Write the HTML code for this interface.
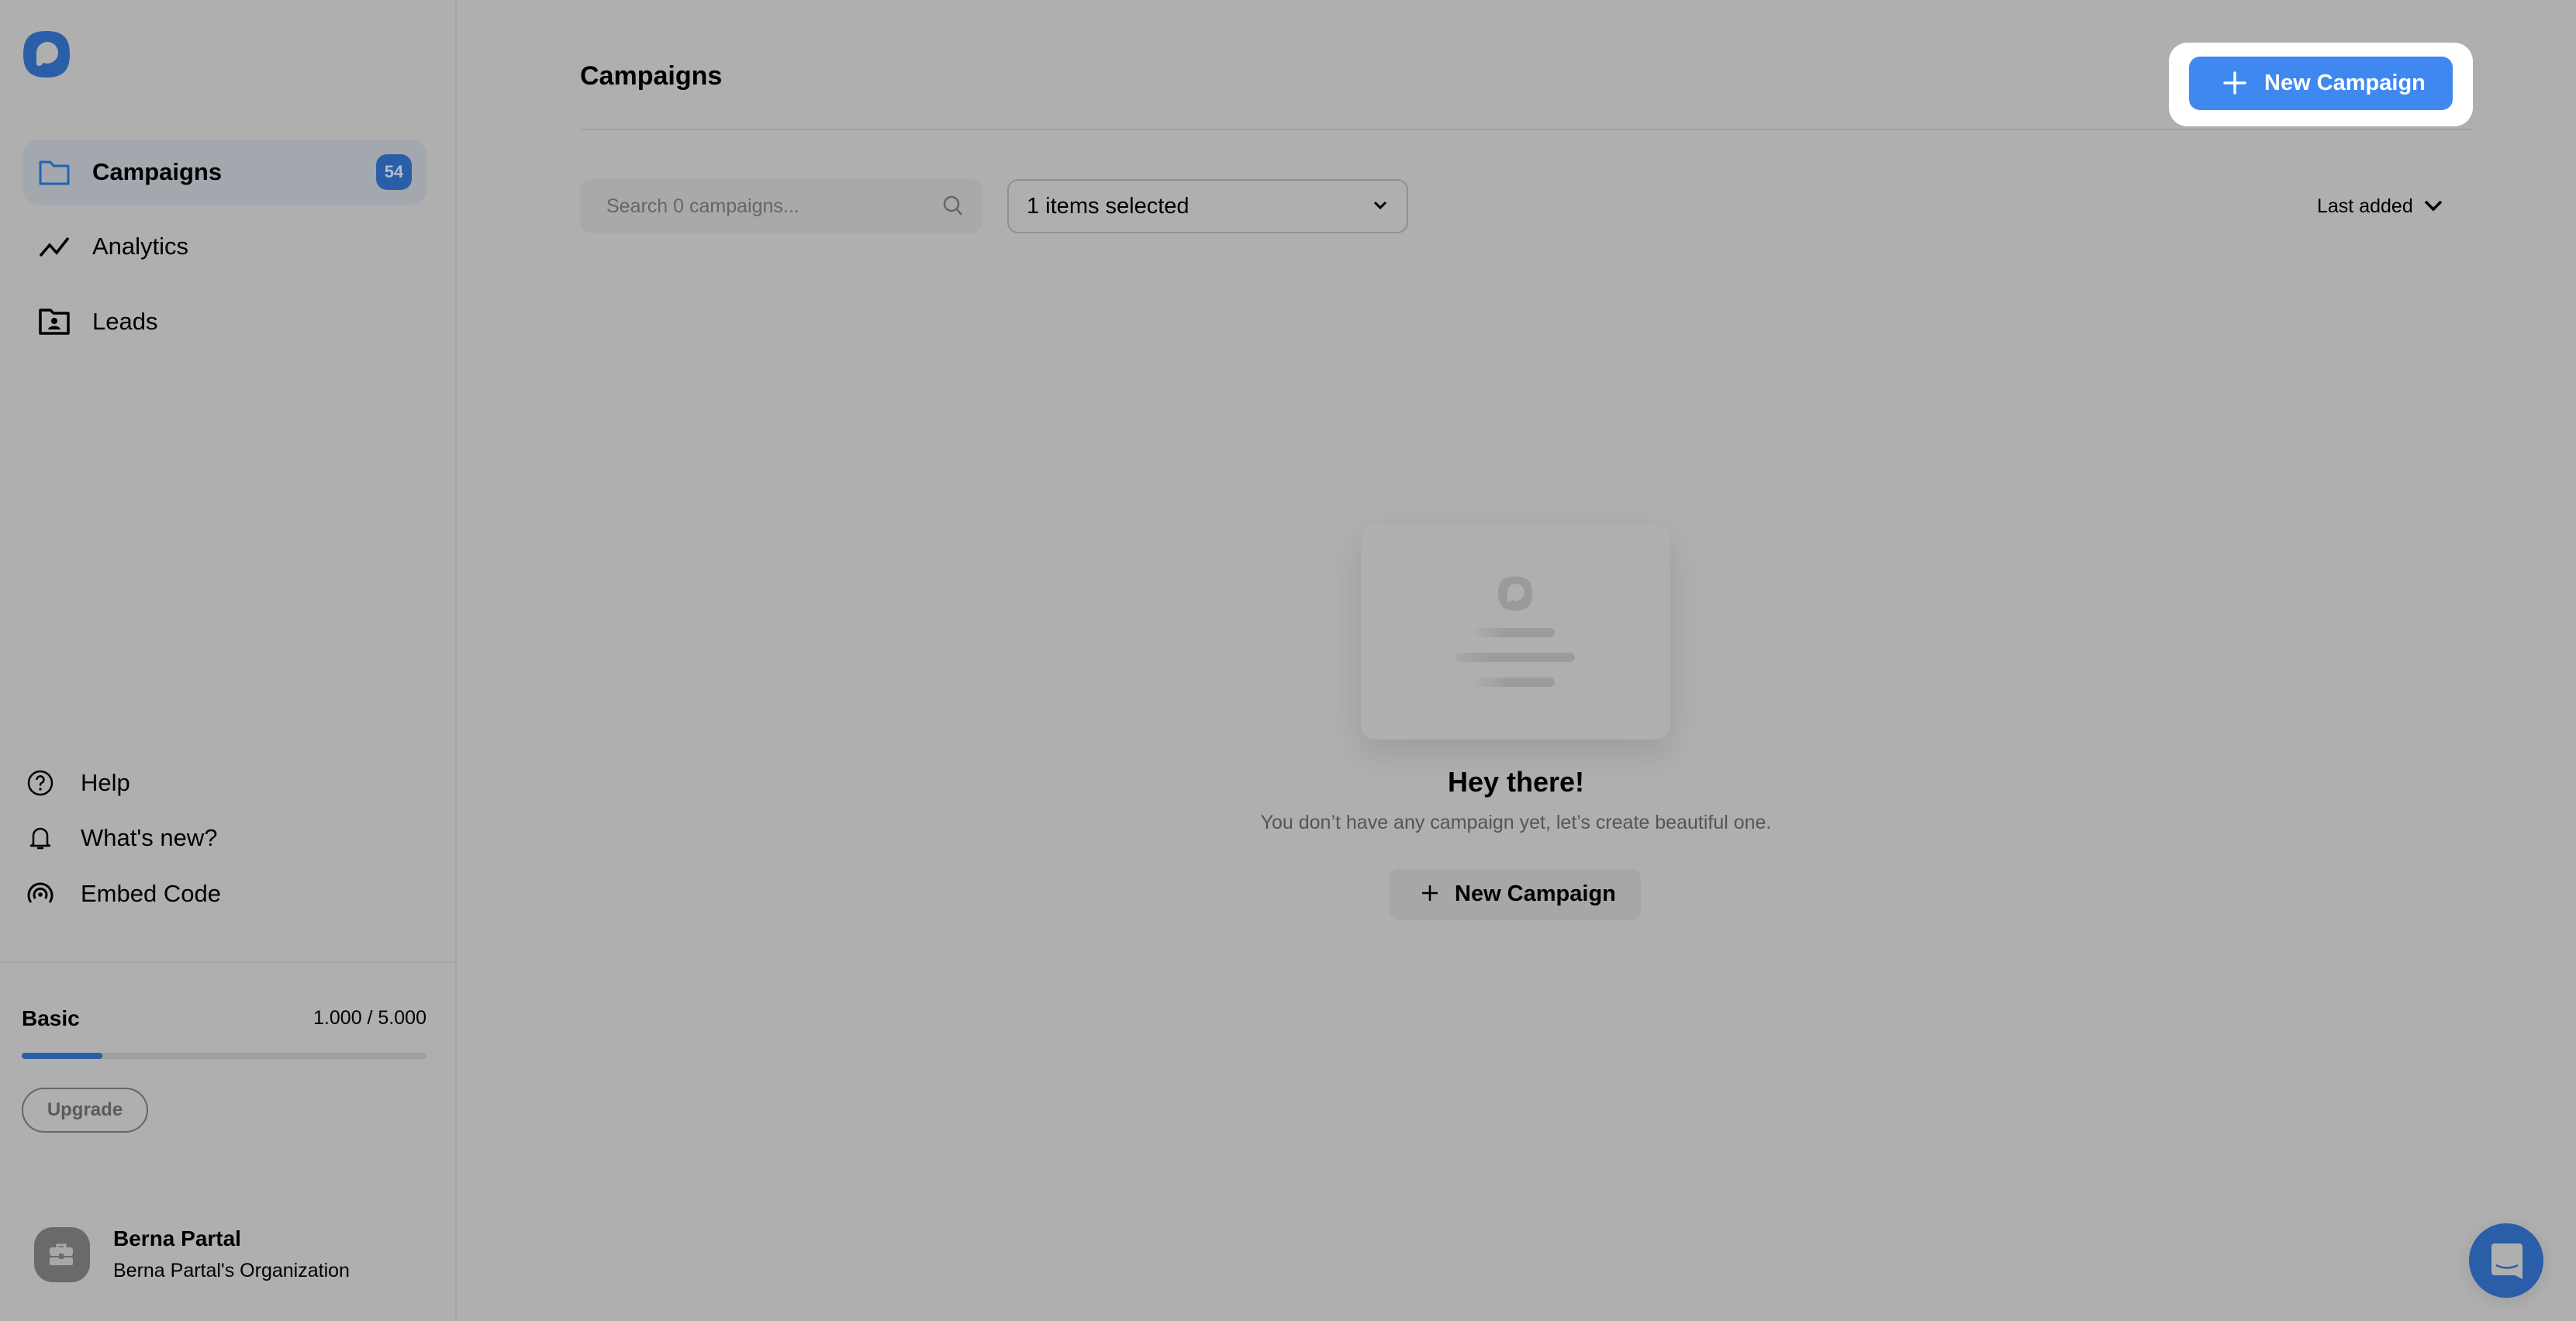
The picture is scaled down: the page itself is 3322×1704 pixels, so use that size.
<!DOCTYPE html>
<html><head><meta charset="utf-8"><style>
*{margin:0;padding:0;box-sizing:border-box}
body{width:3322px;height:1704px;background:#afafaf;font-family:"Liberation Sans",sans-serif;position:relative;overflow:hidden;color:#000}
.a{position:absolute}
.side{left:0;top:0;width:589px;height:1704px;border-right:2px solid #a3a3a3}
.nav{font-size:31px;line-height:1}
</style></head><body>
<div class="a side"></div>
<svg class="a" style="left:28px;top:38px" width="64" height="64" viewBox="0 0 64 64"><path d="M32 2C12 2 2 10 2 32s10 30 30 30 30-8 30-30S52 2 32 2z" fill="#2a5ea8"/><circle cx="33" cy="30" r="14" fill="#afafaf"/><path d="M19 30v14c0 4 6 4 8 0l2-4z" fill="#afafaf"/></svg>
<div class="a" style="left:29px;top:180px;width:521px;height:84px;background:#a3a7ae;border-radius:20px"></div>
<svg class="a" style="left:50px;top:205px" width="40" height="34" viewBox="0 0 40 34"><path d="M2 4h13l4 5h19v23H2z" fill="none" stroke="#1f64b8" stroke-width="3" stroke-linejoin="round"/></svg>
<div class="a nav" style="left:119px;top:206px;font-weight:700">Campaigns</div>
<div class="a" style="left:485px;top:199px;width:46px;height:46px;background:#2a5ea8;border-radius:14px;color:#b5bccb;font-size:22px;font-weight:700;text-align:center;line-height:46px">54</div>
<svg class="a" style="left:50px;top:304px" width="40" height="28" viewBox="0 0 40 28"><path d="M2 26L14 12l9 10L38 3" fill="none" stroke="#000" stroke-width="3.5"/></svg>
<div class="a nav" style="left:119px;top:302px">Analytics</div>
<svg class="a" style="left:50px;top:398px" width="40" height="34" viewBox="0 0 40 34"><path d="M2 2h13l4 4h19v26H2z" fill="none" stroke="#000" stroke-width="3.5" stroke-linejoin="round"/><circle cx="20" cy="16" r="4" fill="#000"/><path d="M12 27c1-6 15-6 16 0z" fill="#000"/></svg>
<div class="a nav" style="left:119px;top:399px">Leads</div>
<svg class="a" style="left:35px;top:993px" width="34" height="34" viewBox="0 0 34 34"><circle cx="17" cy="17" r="15" fill="none" stroke="#000" stroke-width="2.5"/><path d="M12.5 13a4.5 4.5 0 1 1 6 4c-1.5.7-1.5 2-1.5 3.5" fill="none" stroke="#000" stroke-width="2.5"/><circle cx="17" cy="25" r="1.6"/></svg>
<div class="a nav" style="left:104px;top:994px">Help</div>
<svg class="a" style="left:37px;top:1064px" width="30" height="34" viewBox="0 0 30 34"><path d="M6 25V14a9 9 0 0 1 18 0v11l3 2H3z" fill="none" stroke="#000" stroke-width="2.5" stroke-linejoin="round"/><path d="M11 30h8" stroke="#000" stroke-width="2.5"/></svg>
<div class="a nav" style="left:104px;top:1065px">What's new?</div>
<svg class="a" style="left:33px;top:1135px" width="38" height="34" viewBox="0 0 38 34"><path d="M7 29A15 15 0 1 1 31 29" fill="none" stroke="#000" stroke-width="3"/><path d="M12.5 24A8 8 0 1 1 25.5 24" fill="none" stroke="#000" stroke-width="3"/><circle cx="19" cy="19" r="2.8"/></svg>
<div class="a nav" style="left:104px;top:1137px">Embed Code</div>
<div class="a" style="left:0;top:1240px;width:589px;height:2px;background:#a5a5a5"></div>
<div class="a" style="left:28px;top:1298px;font-size:28px;font-weight:700">Basic</div>
<div class="a" style="left:350px;top:1299px;width:200px;text-align:right;font-size:25px">1.000 / 5.000</div>
<div class="a" style="left:28px;top:1358px;width:522px;height:8px;background:#9f9f9f;border-radius:4px"></div>
<div class="a" style="left:28px;top:1358px;width:104px;height:8px;background:#2a5ea8;border-radius:4px"></div>
<div class="a" style="left:28px;top:1403px;width:163px;height:58px;border:2px solid #666;border-radius:29px;color:#5a5a5a;font-size:24px;font-weight:700;text-align:center;line-height:54px">Upgrade</div>
<div class="a" style="left:44px;top:1583px;width:72px;height:71px;background:#6a6a6a;border-radius:24px"></div>
<svg class="a" style="left:62px;top:1603px" width="34" height="30" viewBox="0 0 34 30"><path d="M12 6V3h10v3" fill="none" stroke="#a8a8a8" stroke-width="3"/><rect x="2" y="6" width="30" height="11" rx="3" fill="#a8a8a8"/><rect x="2" y="19" width="30" height="10" rx="2" fill="#a8a8a8"/><rect x="14" y="14" width="6" height="7" fill="#6a6a6a"/></svg>
<div class="a" style="left:146px;top:1582px;font-size:28px;font-weight:700">Berna Partal</div>
<div class="a" style="left:146px;top:1625px;font-size:25px">Berna Partal's Organization</div>
<div class="a" style="left:748px;top:79px;font-size:34px;font-weight:700">Campaigns</div>
<div class="a" style="left:748px;top:166px;width:2441px;height:2px;background:#a2a2a2"></div>
<div class="a" style="left:2797px;top:55px;width:392px;height:108px;background:#fff;border-radius:24px"></div>
<div class="a" style="left:2823px;top:73px;width:340px;height:69px;background:#3f88f0;border-radius:14px"></div>
<svg class="a" style="left:2867px;top:92px" width="30" height="30" viewBox="0 0 30 30"><path d="M15 2v26M2 15h26" stroke="#fff" stroke-width="3.5" stroke-linecap="round"/></svg>
<div class="a" style="left:2920px;top:91px;font-size:29px;font-weight:700;color:#fff">New Campaign</div>
<div class="a" style="left:748px;top:231px;width:519px;height:70px;background:#a9a9a9;border-radius:14px"></div>
<div class="a" style="left:782px;top:252px;font-size:25px;color:#666">Search 0 campaigns...</div>
<svg class="a" style="left:1215px;top:251px" width="28" height="30" viewBox="0 0 28 30"><circle cx="12" cy="12" r="9" fill="none" stroke="#666" stroke-width="2.5"/><path d="M19 19l6 7" stroke="#666" stroke-width="2.5"/></svg>
<div class="a" style="left:1299px;top:231px;width:517px;height:70px;border:2px solid #8e9095;border-radius:14px"></div>
<div class="a" style="left:1324px;top:250px;font-size:29px">1 items selected</div>
<svg class="a" style="left:1770px;top:258px" width="20" height="14" viewBox="0 0 20 14"><path d="M3 3l7 7 7-7" fill="none" stroke="#000" stroke-width="3"/></svg>
<div class="a" style="left:2988px;top:252px;font-size:25px">Last added</div>
<svg class="a" style="left:3125px;top:256px" width="26" height="18" viewBox="0 0 26 18"><path d="M3 4l10 10 10-10" fill="none" stroke="#000" stroke-width="3.5"/></svg>
<div class="a" style="left:1755px;top:676px;width:399px;height:278px;background:#afafaf;border-radius:18px;box-shadow:0 18px 40px rgba(0,0,0,.1)"></div>
<svg class="a" style="left:1930px;top:742px" width="48" height="47" viewBox="0 0 64 64"><path d="M32 2C12 2 2 10 2 32s10 30 30 30 30-8 30-30S52 2 32 2z" fill="#9a9a9a"/><circle cx="33" cy="30" r="15" fill="#afafaf"/><path d="M18 30v14c0 4 6 4 8 0l2-4z" fill="#afafaf"/></svg>
<div class="a" style="left:1902px;top:810px;width:103px;height:12px;border-radius:6px;background:linear-gradient(90deg,#adadad,#9c9c9c 40%)"></div>
<div class="a" style="left:1876px;top:842px;width:155px;height:12px;border-radius:6px;background:linear-gradient(90deg,#a8a8a8,#9c9c9c 30%)"></div>
<div class="a" style="left:1902px;top:874px;width:103px;height:12px;border-radius:6px;background:linear-gradient(90deg,#adadad,#9c9c9c 40%)"></div>
<div class="a" style="left:1555px;top:988px;width:800px;text-align:center;font-size:36px;font-weight:700">Hey there!</div>
<div class="a" style="left:1455px;top:1047px;width:1000px;text-align:center;font-size:25px;color:#555">You don’t have any campaign yet, let’s create beautiful one.</div>
<div class="a" style="left:1792px;top:1121px;width:324px;height:66px;background:#a7a7a7;border-radius:12px"></div>
<svg class="a" style="left:1833px;top:1141px" width="22" height="22" viewBox="0 0 22 22"><path d="M11 1v20M1 11h20" stroke="#000" stroke-width="2.5"/></svg>
<div class="a" style="left:1876px;top:1137px;font-size:29px;font-weight:700">New Campaign</div>
<div class="a" style="left:3184px;top:1578px;width:96px;height:96px;border-radius:50%;background:#2a5ea8;box-shadow:0 4px 20px rgba(0,0,0,.1)"></div>
<svg class="a" style="left:3211px;top:1602px" width="44" height="48" viewBox="0 0 44 48"><path d="M6 2h32a4 4 0 0 1 4 4v42l-10-5H6a4 4 0 0 1-4-4V6a4 4 0 0 1 4-4z" fill="#afafaf"/><path d="M8 30q14 7 28 0" fill="none" stroke="#2a5ea8" stroke-width="2.5"/></svg>
</body></html>
